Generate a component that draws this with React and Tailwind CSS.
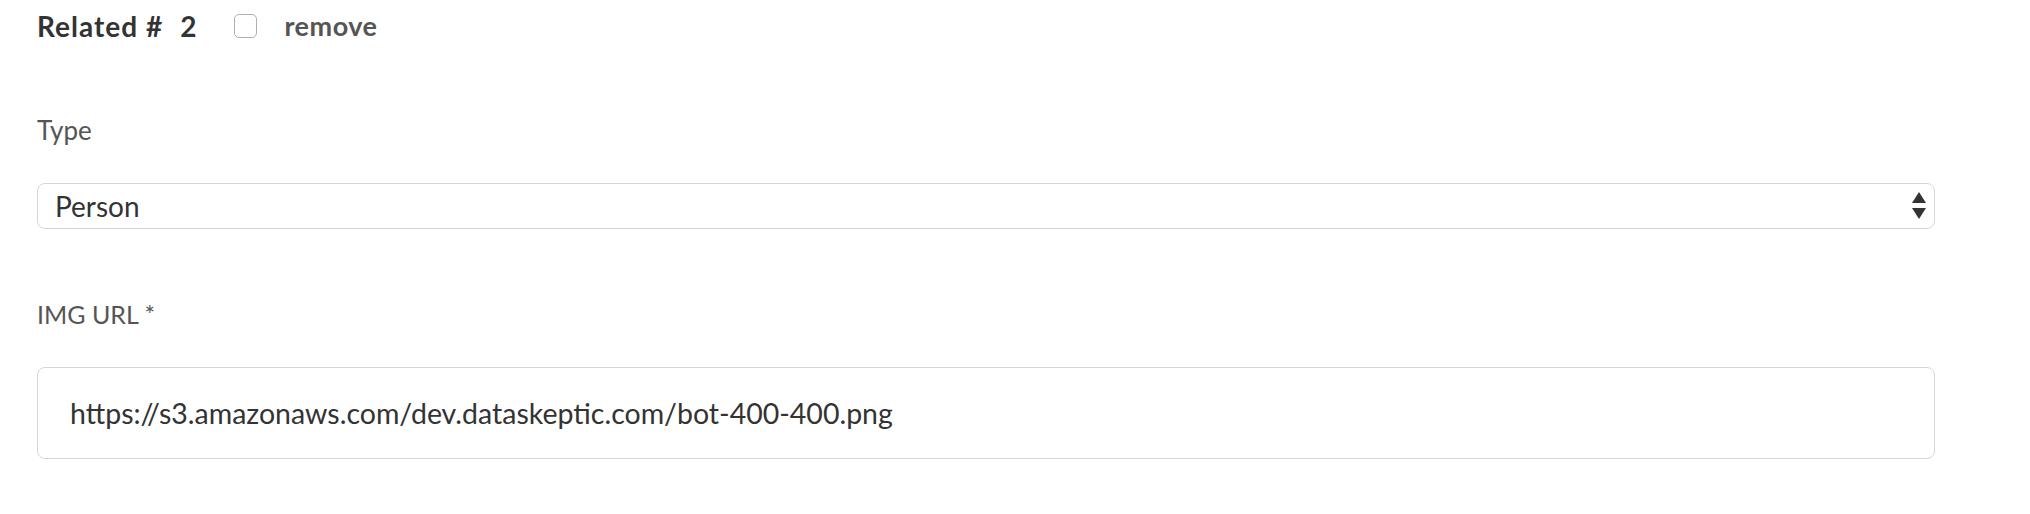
import { useState } from "react";

const font = { fontFamily: '"Lato", "Liberation Sans", sans-serif' };

const App = () => {
  const [type, setType] = useState("Person");
  const [remove, setRemove] = useState(false);
  const [imgUrl, setImgUrl] = useState("https://s3.amazonaws.com/dev.dataskeptic.com/bot-400-400.png");

  return (
    <div className="min-h-screen bg-white font-['Lato',_'Liberation_Sans',_sans-serif]">
      <div className="w-[1898px] ml-[37px] pt-[6px]">
        {/* Header row */}
        <div className="flex items-center h-[40px]">
          <span className="text-[28px] font-bold text-[#333] tracking-[1px]">Related #</span>
          <span className="text-[28px] font-bold text-[#333] ml-[17px]">2</span>
          <label className="flex items-center ml-[38px] cursor-pointer">
            <input
              type="checkbox"
              checked={remove}
              onChange={(e) => setRemove(e.target.checked)}
              className="appearance-none w-[23px] h-[24px] border border-[#b0b0b0] rounded-[5px] bg-white checked:bg-[#4a90e2]"
            />
            <span className="ml-[27px] text-[27px] font-bold text-[#555] tracking-[0.5px]">remove</span>
          </label>
        </div>

        {/* Type */}
        <div className="mt-[69px]">
          <label className="block text-[26px] leading-[30px] text-[#555]">Type</label>
          <div className="relative mt-[38px]">
            <select
              value={type}
              onChange={(e) => setType(e.target.value)}
              className="appearance-none w-full h-[46px] pl-[17px] pr-[40px] border border-[#d6d6d6] rounded-[8px] bg-white text-[28px] text-[#333] outline-none"
            >
              <option>Person</option>
              <option>Podcast</option>
              <option>Paper</option>
              <option>Link</option>
            </select>
            <svg className="absolute right-[9px] top-[9px] pointer-events-none" width="14" height="28" viewBox="0 0 14 28">
              <path d="M7 0 L14 11 L0 11 Z" fill="#333" />
              <path d="M0 16 L14 16 L7 27 Z" fill="#333" />
            </svg>
          </div>
        </div>

        {/* IMG URL */}
        <div className="mt-[70px]">
          <label className="block text-[25px] leading-[30px] text-[#555]">IMG URL *</label>
          <input
            type="text"
            value={imgUrl}
            onChange={(e) => setImgUrl(e.target.value)}
            className="block w-full mt-[38px] h-[92px] px-[32px] border border-[#d6d6d6] rounded-[8px] bg-white text-[28.5px] text-[#333] outline-none"
            style={font}
          />
        </div>
      </div>
    </div>
  );
};

export default App;
